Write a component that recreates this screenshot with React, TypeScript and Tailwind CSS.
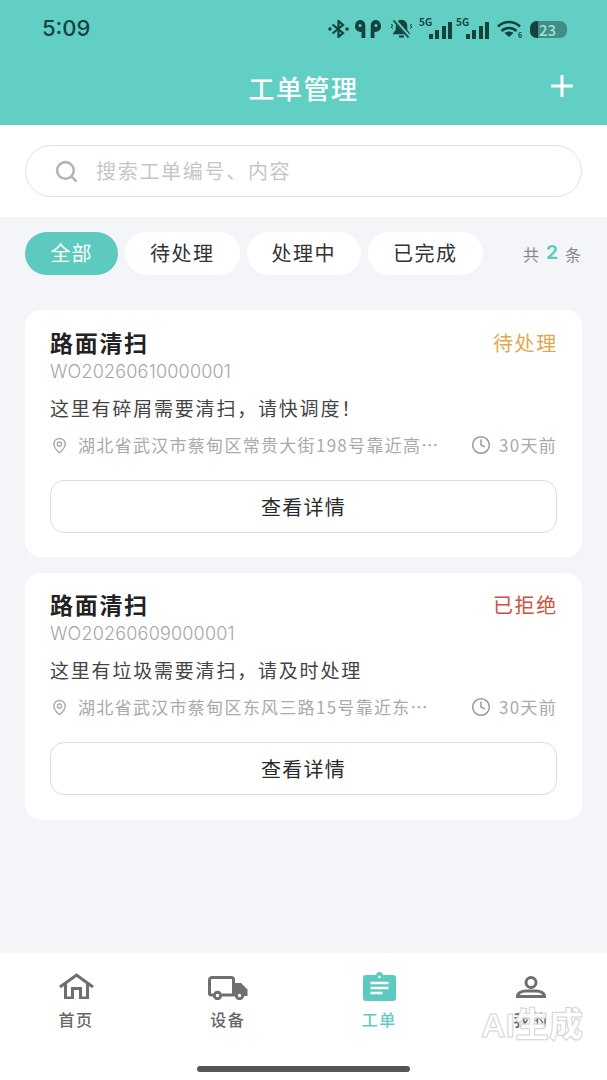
import { Clock, MapPin, Search } from "lucide-react";

const font = { fontFamily: '"Noto Sans CJK SC", "Noto Sans", sans-serif' };

const orders = [
  {
    title: "路面清扫",
    code: "WO20260610000001",
    status: "待处理",
    statusColor: "text-[#e0a94f]",
    desc: "这里有碎屑需要清扫，请快调度！",
    addr: "湖北省武汉市蔡甸区常贵大街198号靠近高新二路",
    pad: "pt-[18px]",
  },
  {
    title: "路面清扫",
    code: "WO20260609000001",
    status: "已拒绝",
    statusColor: "text-[#c8543f]",
    desc: "这里有垃圾需要清扫，请及时处理",
    addr: "湖北省武汉市蔡甸区东风三路15号靠近东风大道",
    pad: "pt-[17px]",
  },
];

function CellSignal({ className }: { className: string }) {
  return (
    <div className={`relative h-[20px] w-[33px] ${className}`}>
      <span className="absolute top-[-2px] left-0 text-[10px] leading-[10px] font-semibold">5G</span>
      <div className="absolute right-0 bottom-0 flex items-end gap-[2.500px]">
        <span className="h-[5px] w-[4px] bg-current" />
        <span className="h-[9px] w-[4px] bg-current" />
        <span className="h-[13px] w-[4px] bg-current" />
        <span className="h-[17px] w-[4px] bg-current" />
      </div>
    </div>
  );
}

function StatusIcons() {
  return (
    <div className="mr-[-2px] flex items-center text-[#14433f]">
      {/* bluetooth */}
      <svg width="21" height="18" viewBox="0 0 21 18" fill="none" stroke="currentColor" strokeWidth="2.200">
        <path d="M4.500 4.500l10.500 8.500-4.500 4V1L15 5 4.500 13.500" />
        <circle cx="2" cy="9" r="1.800" fill="currentColor" stroke="none" />
        <circle cx="19" cy="9" r="1.800" fill="currentColor" stroke="none" />
      </svg>
      {/* earbuds */}
      <svg className="ml-[6px]" width="26" height="18" viewBox="0 0 26 18" fill="currentColor">
        <path d="M6 0a6 6 0 0 0-1.500 11.800c.8.200 1.300.2 2 .1V18h3.800V5.500A6 6 0 0 0 6 0z" />
        <path d="M20 0a6 6 0 0 1 1.500 11.800c-.8.200-1.300.2-2 .1V18h-3.800V5.500A6 6 0 0 1 20 0z" />
        <circle cx="5" cy="5.500" r="1.500" fill="#62cfc5" />
        <circle cx="21" cy="5.500" r="1.500" fill="#62cfc5" />
      </svg>
      {/* muted bell */}
      <svg className="ml-[8px]" width="25" height="20" viewBox="0 0 25 20" fill="none" stroke="currentColor" strokeWidth="1.500">
        <path d="M12.500 1.500c-3.500 0-5 3-5 5.500v4l-2.500 3.500h15L17.500 11V7c0-2.500-1.500-5.500-5-5.500z" fill="currentColor" />
        <path d="M10 17.500h5" strokeWidth="2.200" />
        <path d="M5 0.500l15 17" stroke="#62cfc5" strokeWidth="3.500" />
        <path d="M4.500 1.500l15 17" strokeWidth="1.800" />
        <path d="M2 5l2 1.500-2 1.500 2 1.500M23 5l-2 1.500 2 1.500-2 1.500" strokeWidth="1" />
      </svg>
      <CellSignal className="ml-[5px]" />
      <CellSignal className="ml-[4px]" />
      {/* wifi */}
      <svg className="ml-[8px]" width="26" height="18" viewBox="0 0 26 18" fill="none" stroke="currentColor" strokeWidth="2.600">
        <path d="M1 6.500c6.500-6 15.500-6 22 0" />
        <path d="M4.500 11c4.500-4 10.500-4 15 0" />
        <path d="M12 17l-4.500-4c2.500-2 6.500-2 9 0z" fill="currentColor" stroke="none" />
        <text x="21" y="17.500" fontSize="7" fill="currentColor" stroke="none" fontWeight="600">
          6
        </text>
      </svg>
      {/* battery */}
      <div className="relative ml-[7px] flex h-[17px] w-[37px] items-center rounded-[7px] bg-[#3f8f87]">
        <div className="h-full w-[8px] rounded-l-[7px] bg-[#14433f]" />
        <span className="ml-[1px] text-[15px] leading-none font-medium text-[#a8dfd9]">23</span>
      </div>
    </div>
  );
}

function OrderCard({ order }: { order: (typeof orders)[number] }) {
  return (
    <div className={`flex h-[247px] flex-col rounded-[16px] bg-white px-[25px] ${order.pad}`}>
      <div className="flex items-center justify-between">
        <span className="text-[23px] leading-[29px] font-semibold tracking-[1.700px] text-[#222]">{order.title}</span>
        <span className={`mr-[-1px] text-[20px] leading-[27px] tracking-[1.700px] ${order.statusColor}`}>{order.status}</span>
      </div>
      <div
        className="mt-[4px] text-[18px] leading-[22px] tracking-[0.200px] text-[#a6a6a6]"
        style={{ fontFamily: "Inter, sans-serif", fontWeight: 300 }}
      >
        {order.code}
      </div>
      <div className="mt-[12px] text-[19px] leading-[26px] tracking-[1.800px] text-[#444]">{order.desc}</div>
      <div className="mt-[12px] flex items-center text-[17px] leading-[24px] tracking-[1.300px] text-[#aaa]">
        <MapPin size={17} strokeWidth={2} className="mr-[10px] ml-[1px] shrink-0" />
        <span className="min-w-0 flex-1 truncate">{order.addr}</span>
        <Clock size={20} strokeWidth={1.800} className="mr-[8px] ml-[28px] shrink-0 text-[#999]" />
        <span className="shrink-0">30天前</span>
      </div>
      <button className="mt-[23px] h-[53px] w-full rounded-[14px] border border-[#dcdcdc] bg-white text-[20px] tracking-[1.300px] text-[#2a2a2a]">
        查看详情
      </button>
    </div>
  );
}

function NavItem({ label, active, children }: { label: string; active?: boolean; children: React.ReactNode }) {
  return (
    <div className="flex w-[76px] flex-col items-center">
      <div className="flex h-[34px] items-center justify-center">{children}</div>
      <span className={`mt-[5px] text-[16px] leading-[22px] font-medium tracking-[1.500px] ${active ? "text-[#62cbc0]" : "text-[#666]"}`}>
        {label}
      </span>
    </div>
  );
}

export default function App() {
  return (
    <div className="relative flex h-[1080px] w-[607px] flex-col overflow-hidden bg-[#f3f5f9]" style={font}>
      <header className="h-[125px] shrink-0 bg-[#62cfc5] px-[42px]">
        <div className="flex h-[58px] items-center justify-between">
          <span className="pb-[2px] text-[22px] font-medium text-[#14433f]" style={{ fontFamily: "Inter, sans-serif" }}>
            5:09
          </span>
          <StatusIcons />
        </div>
        <div className="relative flex h-[58px] items-center justify-center">
          <span className="text-[26px] font-medium tracking-[1.500px] text-white">工单管理</span>
          <svg className="absolute top-[16px] right-[-9px]" width="24" height="24" viewBox="0 0 24 24" stroke="white" strokeWidth="3">
            <path d="M12 1v22M1 12h22" />
          </svg>
        </div>
      </header>

      <div className="h-[92px] shrink-0 bg-white px-[25px] pt-[20px]">
        <div className="flex h-[52px] items-center rounded-full border border-[#e2e2e2] pl-[28px]">
          <Search size={25} className="mr-[17px] text-[#b5b5b5]" strokeWidth={2.500} />
          <span className="text-[20px] tracking-[1.700px] text-[#c6c6c6]">搜索工单编号、内容</span>
        </div>
      </div>

      <div className="flex items-center gap-[7px] px-[25px] pt-[15px]">
        <span className="flex h-[43px] w-[93px] items-center justify-center rounded-full bg-[#5ccabf] pb-[1px] text-[20px] tracking-[1px] text-white">
          全部
        </span>
        {["待处理", "处理中", "已完成"].map((t) => (
          <span
            key={t}
            className="flex h-[43px] w-[114.500px] items-center justify-center rounded-full bg-white pb-[1px] text-[20px] tracking-[1.500px] text-[#333]"
          >
            {t}
          </span>
        ))}
        <span className="mr-[1px] ml-auto flex items-center gap-[7px] text-[16px] text-[#888]">
          共
          <b className="text-[19px] text-[#62cbc0]" style={{ fontFamily: "Inter, sans-serif" }}>
            2
          </b>
          条
        </span>
      </div>

      <main className="flex flex-1 flex-col gap-[16px] px-[25px] pt-[35px]">
        {orders.map((o) => (
          <OrderCard key={o.code} order={o} />
        ))}
      </main>

      <nav className="relative h-[127px] shrink-0 bg-white">
        <div className="flex justify-between px-[38px] pt-[16px]">
          <NavItem label="首页">
            <svg width="35" height="26" viewBox="0 0 35 26" fill="none" stroke="#6f6f6f" strokeWidth="3">
              <path d="M1 14L17.500 2 34 14" />
              <path d="M6.500 11v14h7V15.500h8V25h7V11" />
            </svg>
          </NavItem>
          <NavItem label="设备">
            <svg className="mt-[3px]" width="40" height="24" viewBox="0 0 40 24" fill="none" stroke="#6f6f6f" strokeWidth="3">
              <path d="M5 19H3a1.500 1.500 0 0 1-1.500-1.500V4A2.500 2.500 0 0 1 4 1.500h19.500a2 2 0 0 1 2 2V19H14" />
              <path d="M27 7h6l6.500 6.500V20H27z" fill="#6f6f6f" stroke="none" />
              <circle cx="9.500" cy="19.500" r="3.200" fill="white" />
              <circle cx="31.500" cy="19.500" r="3.200" fill="white" />
            </svg>
          </NavItem>
          <NavItem label="工单" active>
            <svg width="33" height="29" viewBox="0 0 33 29">
              <path d="M3 3h10c.5-2 1.500-3 3.500-3s3 1 3.500 3h10a3 3 0 0 1 3 3v20a3 3 0 0 1-3 3H3a3 3 0 0 1-3-3V6a3 3 0 0 1 3-3z" fill="#5ccabf" />
              <circle cx="16.500" cy="5" r="1.300" fill="white" />
              <path d="M7.500 11h18M7.500 16h18M7.500 21h12" stroke="white" strokeWidth="2.500" />
            </svg>
          </NavItem>
          <NavItem label="我的">
            <svg className="mt-[2px]" width="30" height="22" viewBox="0 0 30 22" fill="none" stroke="#6f6f6f" strokeWidth="3">
              <circle cx="15" cy="6.500" r="5" />
              <path d="M1.500 20.500c0-3.500 4-5.500 8-5.500h11c4 0 8 2 8 5.500z" />
            </svg>
          </NavItem>
        </div>
        <div className="absolute bottom-[8px] left-[197px] h-[6px] w-[213px] rounded-full bg-[#555]" />
      </nav>

      {/* watermark */}
      <span
        className="absolute top-[1004px] left-[481px] text-[34px] leading-[42px] font-black text-white/95"
        style={{ WebkitTextStroke: "1px #d4d4d4", fontFamily: '"Liberation Sans", "Noto Sans CJK SC", sans-serif' }}
      >
        AI生成
      </span>
    </div>
  );
}
